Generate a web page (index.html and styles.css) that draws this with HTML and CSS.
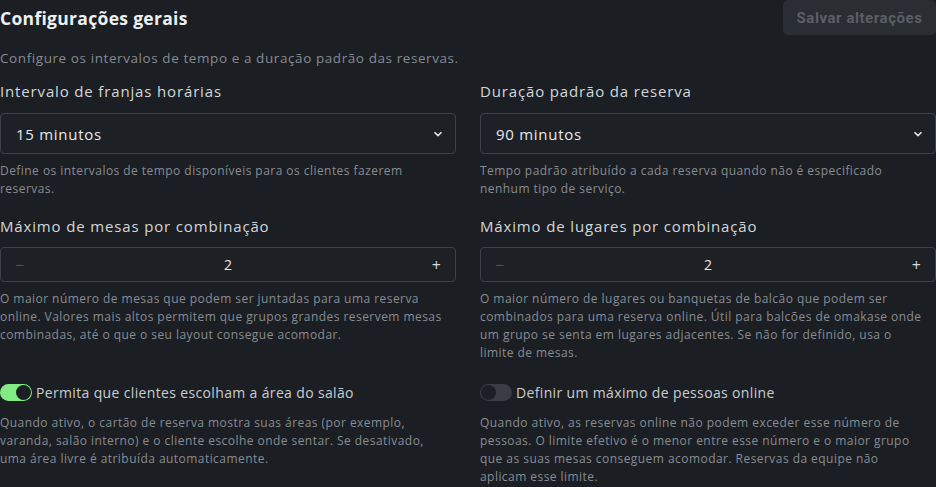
FILE: index.html
```html
<!DOCTYPE html>
<html lang="pt">
<head>
<meta charset="utf-8">
<link rel="stylesheet" href="styles.css">
</head>
<body>
<div class="page">
  <header class="head">
    <h1 class="title">Configurações gerais</h1>
    <button class="save" type="button">Salvar alterações</button>
  </header>
  <p class="subtitle">Configure os intervalos de tempo e a duração padrão das reservas.</p>
  <div class="grid">
    <div class="field">
      <div class="label">Intervalo de franjas horárias</div>
      <div class="select"><span>15 minutos</span>
        <svg class="chev" width="10" height="6" viewBox="0 0 10 6"><path d="M1.5 1.2 5 4.6 8.5 1.2" fill="none" stroke="#e6e8eb" stroke-width="1.6"/></svg>
      </div>
      <p class="help">Define os intervalos de tempo disponíveis para os clientes fazerem<br>reservas.</p>
    </div>
    <div class="field">
      <div class="label">Duração padrão da reserva</div>
      <div class="select"><span>90 minutos</span>
        <svg class="chev" width="10" height="6" viewBox="0 0 10 6"><path d="M1.5 1.2 5 4.6 8.5 1.2" fill="none" stroke="#e6e8eb" stroke-width="1.6"/></svg>
      </div>
      <p class="help">Tempo padrão atribuído a cada reserva quando não é especificado<br>nenhum tipo de serviço.</p>
    </div>
    <div class="field">
      <div class="label">Máximo de mesas por combinação</div>
      <div class="stepper">
        <span class="minus">−</span><span class="val">2</span><span class="plus">+</span>
      </div>
      <p class="help">O maior número de mesas que podem ser juntadas para uma reserva<br>online. Valores mais altos permitem que grupos grandes reservem mesas<br>combinadas, até o que o seu layout consegue acomodar.</p>
    </div>
    <div class="field">
      <div class="label">Máximo de lugares por combinação</div>
      <div class="stepper">
        <span class="minus">−</span><span class="val">2</span><span class="plus">+</span>
      </div>
      <p class="help">O maior número de lugares ou banquetas de balcão que podem ser<br>combinados para uma reserva online. Útil para balcões de omakase onde<br>um grupo se senta em lugares adjacentes. Se não for definido, usa o<br>limite de mesas.</p>
    </div>
    <div class="field">
      <div class="toggle-row"><span class="toggle on"><span class="knob"></span></span><span class="tlabel">Permita que clientes escolham a área do salão</span></div>
      <p class="help help-t">Quando ativo, o cartão de reserva mostra suas áreas (por exemplo,<br>varanda, salão interno) e o cliente escolhe onde sentar. Se desativado,<br>uma área livre é atribuída automaticamente.</p>
    </div>
    <div class="field">
      <div class="toggle-row"><span class="toggle"><span class="knob"></span></span><span class="tlabel">Definir um máximo de pessoas online</span></div>
      <p class="help help-t">Quando ativo, as reservas online não podem exceder esse número de<br>pessoas. O limite efetivo é o menor entre esse número e o maior grupo<br>que as suas mesas conseguem acomodar. Reservas da equipe não<br>aplicam esse limite.</p>
    </div>
  </div>
</div>
</body>
</html>
```
FILE: styles.css
```css
* { box-sizing: border-box; }
html, body { margin: 0; padding: 0; background: #1b1e22; }
body { font-family: "Open Sans", "DejaVu Sans", sans-serif; color: #e4e6ea; width: 936px; height: 487px; overflow: hidden; }
.page { padding: 0; }
.head { display: flex; justify-content: space-between; align-items: center; height: 35px; }
.title { margin: 0; font-size: 17.5px; font-weight: 700; color: #eef0f2; letter-spacing: 0.3px; }
.save { height: 35px; width: 153px; padding: 0; border: none; border-radius: 5px; background: #2a2d32; color: #5b5f66; font-family: "Roboto", "Liberation Sans", sans-serif; font-weight: 700; font-size: 15px; letter-spacing: 0.55px; }
.subtitle { margin: 13px 0 0; font-size: 13.5px; color: #868b93; letter-spacing: 0.58px; line-height: 20px; }
.grid { display: grid; grid-template-columns: 1fr 1fr; column-gap: 24px; row-gap: 19px; margin-top: 14px; }
.label { font-size: 15px; font-weight: 500; color: #d3d7dc; line-height: 18px; letter-spacing: 0.85px; }
.select { margin-top: 13px; height: 41px; border: 1px solid #3d4148; border-radius: 4px; background: #1d2025; display: flex; align-items: center; justify-content: space-between; padding: 0 12px 0 15px; font-size: 15px; color: #e8eaed; letter-spacing: 0.72px; }
.chev { display: block; }
.help { margin: 8px 0 0; font-size: 12px; line-height: 18px; color: #888d95; letter-spacing: 0.45px; white-space: nowrap; }
.stepper { margin-top: 12px; height: 35px; border: 1px solid #3d4148; border-radius: 4px; background: #1d2025; display: flex; align-items: center; padding: 0 14px 0 14px; font-size: 14px; }
.minus { color: #4a4e55; width: 14px; font-size: 16px; }
.val { flex: 1; text-align: center; color: #e8eaed; }
.plus { color: #d6d9dd; width: 14px; text-align: right; font-size: 16px; }
.toggle-row { display: flex; align-items: center; gap: 4px; height: 22px; }
.toggle { width: 32px; height: 17px; border-radius: 9px; background: #3a3d43; position: relative; flex: none; }
.toggle.on { background: #82ec84; }
.knob { position: absolute; top: 1px; left: 1px; width: 15px; height: 15px; border-radius: 50%; background: #1c1f23; }
.toggle.on .knob { left: 16px; }
.tlabel { font-size: 14px; color: #c9cdd2; letter-spacing: 0.35px; }
.help-t { margin-top: 11px; }
```
